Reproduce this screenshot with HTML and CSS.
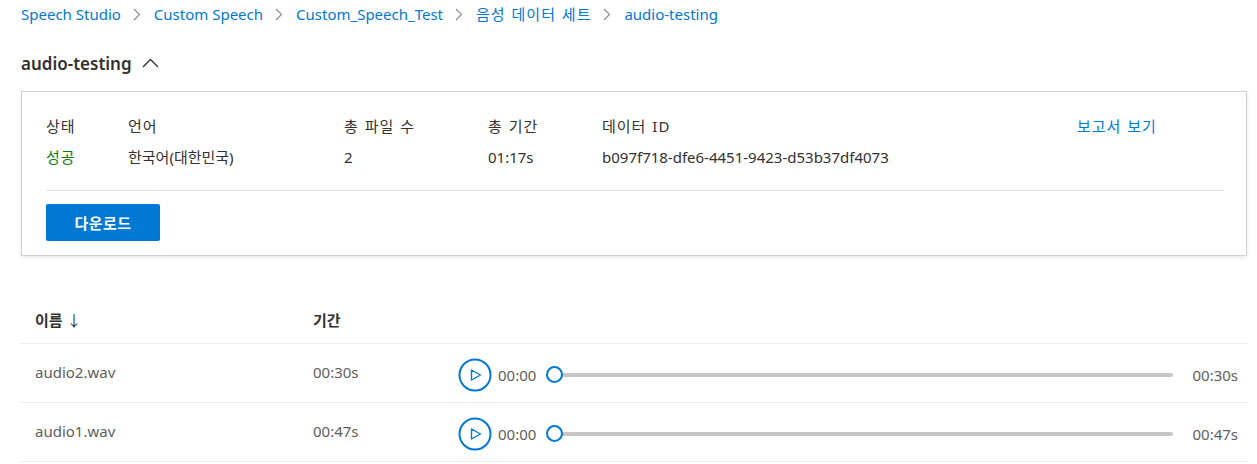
FILE: index.html
```html
<!DOCTYPE html>
<html lang="ko">
<head>
<meta charset="utf-8">
<link rel="stylesheet" href="styles.css">
</head>
<body>
<div class="page">
  <nav class="crumbs">
    <a class="crumb">Speech Studio</a>
    <svg class="sep" width="8" height="13" viewBox="0 0 8 13"><polyline points="1,1 6.5,6.5 1,12" fill="none" stroke="#8a8886" stroke-width="1.1"/></svg>
    <a class="crumb">Custom Speech</a>
    <svg class="sep" width="8" height="13" viewBox="0 0 8 13"><polyline points="1,1 6.5,6.5 1,12" fill="none" stroke="#8a8886" stroke-width="1.1"/></svg>
    <a class="crumb">Custom_Speech_Test</a>
    <svg class="sep" width="8" height="13" viewBox="0 0 8 13"><polyline points="1,1 6.5,6.5 1,12" fill="none" stroke="#8a8886" stroke-width="1.1"/></svg>
    <a class="crumb ko">음성 데이터 세트</a>
    <svg class="sep" width="8" height="13" viewBox="0 0 8 13"><polyline points="1,1 6.5,6.5 1,12" fill="none" stroke="#8a8886" stroke-width="1.1"/></svg>
    <a class="crumb">audio-testing</a>
  </nav>

  <h1 class="title">audio-testing
    <svg class="caret" width="17" height="10" viewBox="0 0 17 10"><polyline points="1,9 8.5,1.5 16,9" fill="none" stroke="#323130" stroke-width="1.4"/></svg>
  </h1>

  <section class="card">
    <div class="info">
      <div class="lbl ko">상태</div>
      <div class="lbl ko">언어</div>
      <div class="lbl ko">총 파일 수</div>
      <div class="lbl ko">총 기간</div>
      <div class="lbl ko">데이터 ID</div>
      <a class="lbl ko link">보고서 보기</a>
      <div class="val ok ko">성공</div>
      <div class="val">한국어(대한민국)</div>
      <div class="val">2</div>
      <div class="val">01:17s</div>
      <div class="val">b097f718-dfe6-4451-9423-d53b37df4073</div>
      <div class="val"></div>
    </div>
    <hr class="divider">
    <button class="btn">다운로드</button>
  </section>

  <div class="table">
    <div class="thead">
      <div class="c-name">이름 <span class="arrow">↓</span></div>
      <div class="c-dur">기간</div>
    </div>
    <div class="row">
      <div class="c-name">audio2.wav</div>
      <div class="c-dur">00:30s</div>
      <div class="player">
        <svg class="play" width="34" height="34" viewBox="0 0 34 34"><circle cx="17" cy="17" r="15.5" fill="none" stroke="#0078d4" stroke-width="2"/><polygon points="13.5,12 13.5,22 22.5,17" fill="none" stroke="#0078d4" stroke-width="1.4" stroke-linejoin="round"/></svg>
        <span class="time">00:00</span>
        <div class="slider"><div class="track"></div><div class="thumb"></div></div>
        <span class="time end">00:30s</span>
      </div>
    </div>
    <div class="row">
      <div class="c-name">audio1.wav</div>
      <div class="c-dur">00:47s</div>
      <div class="player">
        <svg class="play" width="34" height="34" viewBox="0 0 34 34"><circle cx="17" cy="17" r="15.5" fill="none" stroke="#0078d4" stroke-width="2"/><polygon points="13.5,12 13.5,22 22.5,17" fill="none" stroke="#0078d4" stroke-width="1.4" stroke-linejoin="round"/></svg>
        <span class="time">00:00</span>
        <div class="slider"><div class="track"></div><div class="thumb"></div></div>
        <span class="time end">00:47s</span>
      </div>
    </div>
  </div>
</div>
</body>
</html>
```

FILE: styles.css
```css
* { box-sizing: border-box; }
html, body { margin: 0; background: #fff; }
body {
  font-family: "Segoe UI", "Noto Sans", "Noto Sans CJK KR", sans-serif;
  font-size: 15px;
  color: #323130;
}
.page { padding: 0 10px 0 21px; width: 1257px; }
.ko { letter-spacing: 1px; word-spacing: 1px; }

.crumbs {
  display: flex;
  align-items: center;
  height: 28px;
}
.crumb { color: #0078d4; line-height: 20px; }
.sep { margin: 0 13px 0 12px; }

.title {
  display: flex;
  align-items: center;
  margin: 0;
  height: 50px;
  padding-top: 22px;
  font-size: 17px;
  font-weight: 600;
  line-height: 24px;
}
.caret { margin-left: 10px; margin-top: -2px; }

.card {
  margin-top: 13px;
  width: 1226px;
  border: 1px solid #d2d0ce;
  box-shadow: 0 1.6px 3.6px rgba(0,0,0,0.10), 0 0.3px 0.9px rgba(0,0,0,0.08);
  padding: 24px 22px 14px 24px;
}
.info {
  display: grid;
  grid-template-columns: 82px 216px 144px 114px 475px 1fr;
  row-gap: 11px;
  line-height: 20px;
}
.link { color: #0078d4; }
.ok { color: #107c10; }
.divider {
  border: 0;
  border-top: 1px solid #e1dfdd;
  margin: 23px 0 13px;
}
.btn {
  display: block;
  width: 114px;
  height: 37px;
  border: 0;
  border-radius: 2px;
  background: #0078d4;
  color: #fff;
  font-family: inherit;
  font-size: 15px;
  font-weight: 600;
  letter-spacing: 0.5px;
}

.table { margin-top: 39px; width: 1226px; }
.thead, .row {
  display: flex;
  align-items: center;
}
.thead {
  height: 49px;
  font-weight: 600;
  border-bottom: 1px solid #edebe9;
}
.row {
  height: 59px;
  border-bottom: 1px solid #edebe9;
  color: #605e5c;
}
.row .c-name, .row .c-dur { padding-bottom: 3px; }
.c-name { width: 292px; padding-left: 14px; }
.c-dur { width: 145px; }
.arrow { font-weight: 400; color: #323130; }
.player {
  flex: 1;
  display: flex;
  align-items: center;
  padding-right: 9px;
  padding-top: 3px;
}
.play { flex: none; }
.time { color: #605e5c; margin-left: 6px; }
.time.end { margin-left: 19px; }
.slider {
  position: relative;
  flex: 1;
  height: 17px;
  margin-left: 10px;
  display: flex;
  align-items: center;
}
.track {
  flex: 1;
  margin-left: 8px;
  height: 4px;
  border-radius: 2px;
  background: #c8c6c4;
}
.thumb {
  position: absolute;
  left: 0;
  top: 0;
  width: 17px;
  height: 17px;
  border-radius: 50%;
  border: 2px solid #0078d4;
  background: #fff;
}
```
